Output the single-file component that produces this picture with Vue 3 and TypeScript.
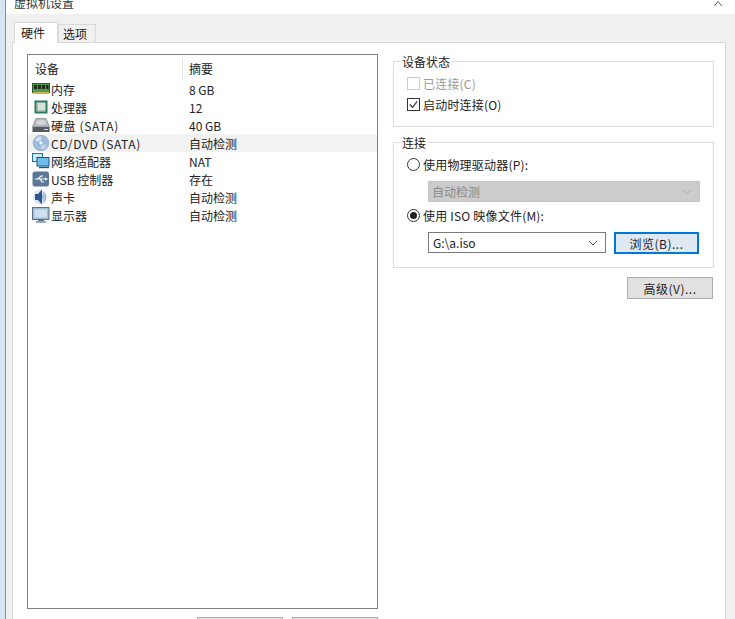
<template>
  <div class="screen">
    <div class="edge"></div>
    <div class="win">
      <div class="titlebar">
        <span class="title">虚拟机设置</span>
        <svg class="close" viewBox="0 0 12 8" fill="none" stroke="#333" stroke-width="1"><path d="M1 8L6 2l5 6" /></svg>
      </div>
      <div class="body">
        <div class="tabs">
          <div class="tab active">硬件</div>
          <div class="tab">选项</div>
        </div>
        <div class="panel">
          <div class="left">
            <div class="listbox">
              <div class="head">
                <span class="c1">设备</span>
                <span class="c2">摘要</span>
              </div>
              <div v-for="d in devices" :key="d.name" class="row" :class="{ sel: d.sel }">
                <span class="ico">
                  <svg v-if="d.icon === 'ram'" viewBox="0 0 18 16"><rect x="0.5" y="2.5" width="17" height="9" fill="#4b9a4b" stroke="#2c5c2c" /><path d="M2 4h3v4H2zM6 4h3v4H6zM10 4h3v4h-3zM14 4h2.500v4H14z" fill="#1f2f1c" /><path d="M1 11h16v2H1z" fill="#c8b24a" /></svg>
                  <svg v-else-if="d.icon === 'cpu'" viewBox="0 0 18 16"><rect x="2.500" y="1.500" width="13" height="13" fill="#2a7d5c" /><rect x="4.500" y="3.500" width="9" height="9" fill="#d8e2da" /><path d="M4.500 12.500h9v-1h-8v-8h-1z" fill="#8a9c90" /></svg>
                  <svg v-else-if="d.icon === 'hdd'" viewBox="0 0 18 16"><path d="M4 1.500h10l3.500 8.500H.5z" fill="#b4bac1" stroke="#7c8289" stroke-width=".7" /><ellipse cx="9" cy="5.500" rx="5" ry="2.500" fill="#d3d7db" /><rect x=".5" y="10" width="17" height="5" fill="#565c62" /><path d="M12 12.500h4" stroke="#cfd4d8" /></svg>
                  <svg v-else-if="d.icon === 'cd'" viewBox="0 0 18 16"><circle cx="9" cy="8" r="7.800" fill="#9dbde0" stroke="#7d9cc0" stroke-width=".6" /><path d="M3 5a7 7 0 0 1 6-3.500V8z" fill="#d6e5f3" /><path d="M15 11a7 7 0 0 1-6 3.500V8z" fill="#c3d7ec" /><circle cx="9" cy="8" r="2.200" fill="#eef4fa" stroke="#6f8fb3" stroke-width=".6" /></svg>
                  <svg v-else-if="d.icon === 'net'" viewBox="0 0 18 16"><rect x=".5" y=".5" width="10" height="8" fill="#cfe6f7" stroke="#1f6fa8" /><rect x="5" y="4.500" width="12" height="8.500" fill="#6fbde8" stroke="#14598c" /><path d="M7 14.500h10" stroke="#14598c" stroke-width="1.400" /></svg>
                  <svg v-else-if="d.icon === 'usb'" viewBox="0 0 18 16"><rect x=".5" y=".5" width="16.500" height="15" rx="2.500" fill="#5a7896" /><path d="M3 8h11M6 8l3-3h2M8 8l2 3h2" stroke="#fff" stroke-width="1.200" fill="none" /><path d="M13 6.300l3 1.700-3 1.700z" fill="#fff" /></svg>
                  <svg v-else-if="d.icon === 'snd'" viewBox="0 0 18 16"><ellipse cx="8" cy="8" rx="7" ry="7.800" fill="#dfe8f2" /><path d="M3 5h3l4-4.500v15L6 11H3z" fill="#2f5590" /><path d="M11.500 3.500a6 6 0 0 1 0 9M10.500 6a3 3 0 0 1 0 4" stroke="#8fb0d2" stroke-width="1.400" fill="none" /></svg>
                  <svg v-else viewBox="0 0 18 16"><rect x=".5" y=".5" width="16.500" height="12" fill="#a0bfd6" stroke="#5b7388" /><rect x="2.500" y="2.500" width="12.500" height="8" fill="#cfe0ec" /><path d="M6 12.500h6v1.500H6z" fill="#5b7388" /><path d="M4 14.500h10v1H4z" fill="#3f4f5e" /></svg>
                </span>
                <span class="name" :class="{ wide: d.wide }">{{ d.name }}</span>
                <span class="val">{{ d.val }}</span>
              </div>
            </div>
            <div class="bottom-btns">
              <button type="button" class="btn"></button>
              <button type="button" class="btn"></button>
            </div>
          </div>

          <div class="right">
            <div class="group g1">
              <span class="legend">设备状态</span>
              <label class="opt dim"><span class="chk off"></span>已连接(C)</label>
              <label class="opt">
                <span class="chk">
                  <svg viewBox="0 0 12 12" fill="none" stroke="#333" stroke-width="1.300"><path d="M2 6l3 3 5-6.500" /></svg>
                </span>启动时连接(O)
              </label>
            </div>

            <div class="group g2">
              <span class="legend">连接</span>
              <label class="opt"><span class="radio"></span>使用物理驱动器(P):</label>
              <div class="select disabled">
                <span>自动检测</span>
                <svg class="chev" viewBox="0 0 10 6" fill="none" stroke="#aaa"><path d="M1 1l4 4 4-4" /></svg>
              </div>
              <label class="opt opt2"><span class="radio on"></span>使用 ISO 映像文件(M):</label>
              <div class="filerow">
                <div class="select file">
                  <span>G:\a.iso</span>
                  <svg class="chev" viewBox="0 0 10 6" fill="none" stroke="#555"><path d="M1 1l4 4 4-4" /></svg>
                </div>
                <button type="button" class="btn focus">浏览(B)...</button>
              </div>
            </div>

            <div class="adv"><button type="button" class="btn">高级(V)...</button></div>
          </div>
        </div>
      </div>
    </div>
  </div>
</template>

<script setup lang="ts">
const devices: { name: string; val: string; icon: string; sel?: boolean; wide?: boolean }[] = [
  { name: '内存', val: '8 GB', icon: 'ram' },
  { name: '处理器', val: '12', icon: 'cpu' },
  { name: '硬盘 (SATA)', val: '40 GB', icon: 'hdd', wide: true },
  { name: 'CD/DVD (SATA)', val: '自动检测', icon: 'cd', sel: true, wide: true },
  { name: '网络适配器', val: 'NAT', icon: 'net' },
  { name: 'USB 控制器', val: '存在', icon: 'usb' },
  { name: '声卡', val: '自动检测', icon: 'snd' },
  { name: '显示器', val: '自动检测', icon: 'mon' },
];
</script>

<style>
html, body { margin: 0; background: #fff; overflow: hidden; }
</style>

<style scoped>
.screen {
  width: 735px;
  height: 619px;
  display: flex;
  overflow: hidden;
  background: #fff;
  font-family: "Noto Sans CJK SC", "Liberation Sans", sans-serif;
  font-size: 12px;
  color: #222;
}
.edge { width: 5px; flex-shrink: 0; background: #d6e5f3; border-right: 1px solid #5b9bd5; }
.win { flex: 1; display: flex; flex-direction: column; min-width: 0; }

.titlebar {
  height: 14px;
  flex-shrink: 0;
  display: flex;
  justify-content: space-between;
  align-items: flex-end;
  overflow: hidden;
  padding: 0 11px 0 8px;
}
.title { font-size: 12px; line-height: 18px; margin-bottom: 2px; color: #333; }
.close { width: 12px; height: 6px; margin-bottom: 8px; }

.body { flex: 1; background: #f0f0f0; padding: 8px 9px 0 6px; min-height: 0; }

.tabs { display: flex; height: 20px; padding-left: 2px; position: relative; z-index: 1; }
.tab {
  width: 38px;
  height: 18px;
  margin-top: 2px;
  border: 1px solid #d9d9d9;
  border-bottom: none;
  background: #f0f0f0;
  text-align: center;
  padding-right: 4px;
  line-height: 18px;
  font-size: 12px;
  box-sizing: border-box;
}
.tab.active { width: 44px; height: 21px; margin-top: 0; padding-right: 6px; background: #fff; line-height: 20px; }

.panel {
  height: 600px;
  box-sizing: border-box;
  background: #fff;
  border: 1px solid #d9d9d9;
  padding: 11px 11px 0 14px;
  display: flex;
  gap: 15px;
}
.left { width: 351px; flex-shrink: 0; }
.listbox {
  height: 555px;
  box-sizing: border-box;
  border: 1px solid #828282;
  background: #fff;
}
.head { display: flex; height: 25px; font-size: 12px; }
.c1 { width: 155px; box-sizing: border-box; padding-left: 7px; border-right: 1px solid #e5e5e5; margin-top: 3px; line-height: 22px; }
.c2 { padding-left: 6px; margin-top: 3px; line-height: 22px; }
.row { display: flex; align-items: center; height: 18px; font-size: 12px; }
.row.sel { background: #f2f2f2; }
.ico { width: 18px; height: 16px; margin-left: 4px; margin-right: 1px; flex-shrink: 0; display: flex; }
.ico svg { width: 18px; height: 16px; }
.name { width: 138px; flex-shrink: 0; white-space: nowrap; }
.name.wide { letter-spacing: 0.6px; }
.val { white-space: nowrap; }

.bottom-btns { display: flex; justify-content: flex-end; gap: 9px; margin-top: 8px; }

.btn {
  width: 86px;
  height: 22px;
  box-sizing: border-box;
  padding: 0;
  background: #e1e1e1;
  border: 1px solid #adadad;
  font: inherit;
  letter-spacing: 0.5px;
  color: #222;
  flex-shrink: 0;
}
.btn.focus { background: #dfe9f3; border: 2px solid #0078d7; }

.right { flex: 1; padding-top: 7px; min-width: 0; }
.group { border: 1px solid #dcdcdc; position: relative; box-sizing: border-box; width: 321px; }
.legend { position: absolute; top: -8px; left: 6px; background: #fff; padding: 0 2px; line-height: 16px; }
.g1 { height: 66px; padding: 11px 13px 0; margin-bottom: 15px; }
.g2 { height: 126px; padding: 11px 13px 0; }

.opt { display: flex; align-items: center; height: 21px; line-height: 21px; white-space: nowrap; letter-spacing: 0.2px; }
.opt.dim { color: #9a9a9a; }
.opt2 { margin-top: 2px; height: 22px; }
.chk {
  width: 13px;
  height: 13px;
  box-sizing: border-box;
  border: 1px solid #333;
  margin-right: 3px;
  display: flex;
  background: #fff;
}
.chk.off { border-color: #ccc; }
.chk svg { width: 11px; height: 11px; }
.radio {
  width: 13px;
  height: 13px;
  box-sizing: border-box;
  border: 1px solid #333;
  border-radius: 50%;
  margin-right: 3px;
  display: flex;
  align-items: center;
  justify-content: center;
}
.radio.on::after { content: ""; width: 7px; height: 7px; border-radius: 50%; background: #222; }

.select {
  height: 21px;
  box-sizing: border-box;
  display: flex;
  align-items: center;
  justify-content: space-between;
  padding: 0 7px 0 4px;
  border: 1px solid #bbb;
}
.select.disabled { margin: 6px 0 0 21px; padding-left: 3px; background: #cccccc; border-color: #c4c4c4; color: #8a8a8a; }
.select.file { width: 178px; flex-shrink: 0; border-color: #7a7a7a; background: #fff; }
.chev { width: 10px; height: 6px; }
.filerow { display: flex; gap: 8px; margin: 6px 0 0 21px; }
.filerow .btn { width: 85px; }

.adv { display: flex; justify-content: flex-end; width: 320px; margin-top: 9px; }
</style>
